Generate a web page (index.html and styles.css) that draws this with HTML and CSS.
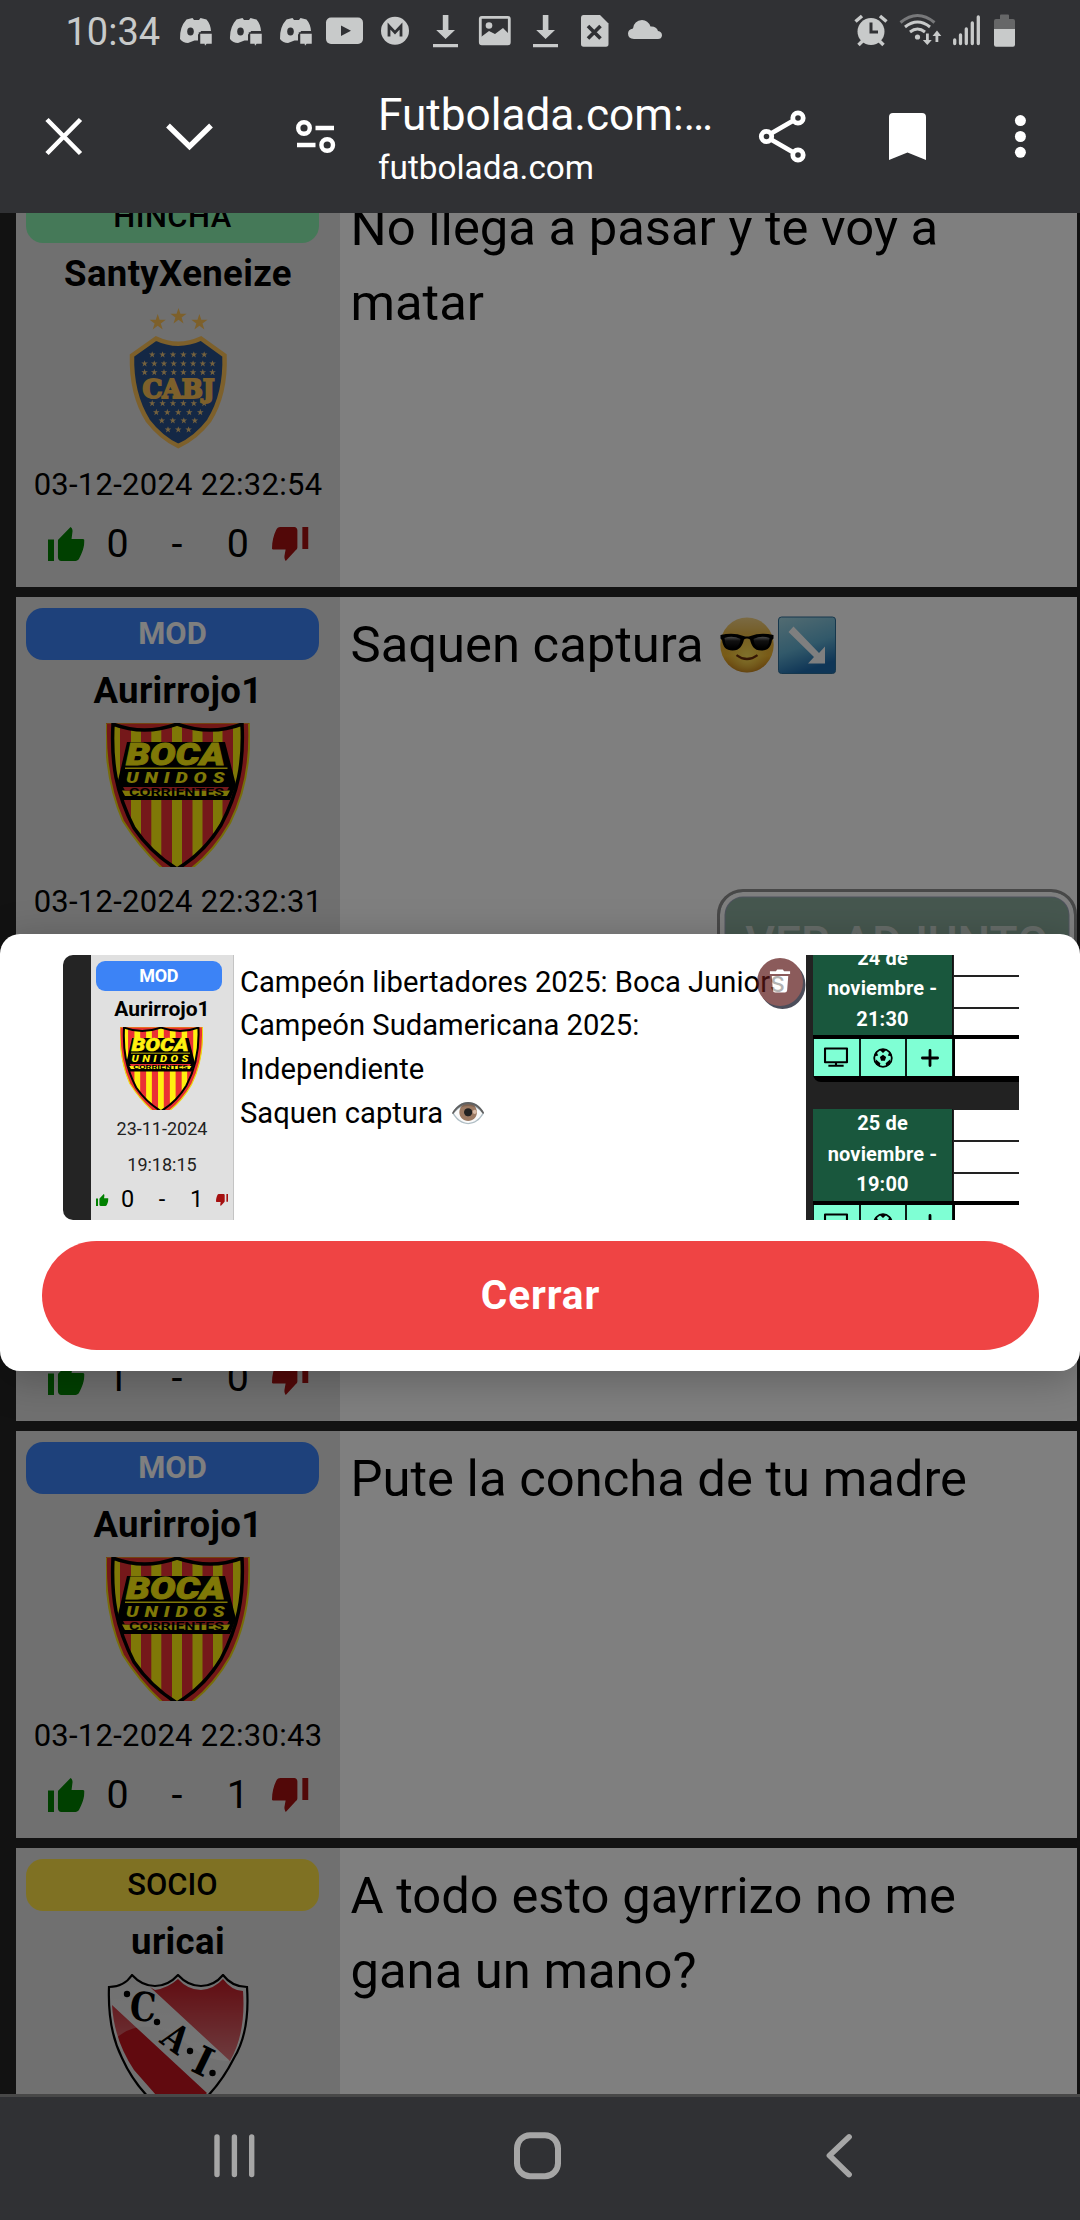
FILE: index.html
```html
<!DOCTYPE html>
<html lang="es">
<head>
<meta charset="utf-8">
<title>Futbolada.com</title>
<link rel="stylesheet" href="styles.css">
</head>
<body>
<svg class="defs" aria-hidden="true">
  <defs>
    <linearGradient id="faceFill" x1="0" y1="0" x2="0" y2="1"><stop offset="0" stop-color="#f6d588"/><stop offset=".3" stop-color="#e9b94a"/><stop offset=".7" stop-color="#f2b62c"/><stop offset="1" stop-color="#b86c10"/></linearGradient>
    <radialGradient id="faceGlow" cx=".5" cy=".7" r=".4"><stop offset="0" stop-color="#ffe258"/><stop offset="1" stop-color="#ffe258" stop-opacity="0"/></radialGradient>
    <linearGradient id="lens" x1="0" y1="0" x2="0" y2="1"><stop offset="0" stop-color="#999"/><stop offset=".35" stop-color="#222"/><stop offset="1" stop-color="#000"/></linearGradient>
    <linearGradient id="arrowFill" x1="0" y1="0" x2=".35" y2="1"><stop offset="0" stop-color="#a6d8e4"/><stop offset=".6" stop-color="#64b2d4"/><stop offset="1" stop-color="#1f6cae"/></linearGradient>
    <linearGradient id="gloss" x1="0" y1="0" x2="0" y2="1"><stop offset="0" stop-color="#fff" stop-opacity="0"/><stop offset="1" stop-color="#fff" stop-opacity=".42"/></linearGradient>
    <clipPath id="unidosClip"><path d="M7 1Q38 13 71 1Q105 13 136 1C138 40 132 70 115 102Q98 130 71 146Q45 130 28 105C10 70 5 40 7 1Z"/></clipPath>
    <clipPath id="caiClip"><path id="caiShape" d="M3 13Q18 13 26 1Q36 12 49 12Q62 12 72 1Q82 12 95 12Q108 12 117 1Q126 13 141 13C143 42 139 66 128 84Q108 124 72 146Q34 124 16 84C5 62 2 40 3 13Z"/></clipPath>
    <symbol id="star" viewBox="-1 -1 2 2"><path d="M0-1 .225-.309H.951L.363.118.588.809 0 .382-.588.809-.363.118-.951-.309H-.225Z"/></symbol>
    <symbol id="up" viewBox="1 1 22 20" preserveAspectRatio="none"><path d="M1 21h3.6V8.400H1V21zM23 8.600c-.2-.4-.7-.6-1.500-.6H15.200l.6-4.600c0-1.100-.5-2-1.200-2.400L8 7.600C7.300 8.200 7 8.500 7 9v10c0 1.100.9 2 2 2h8.500c1 0 1.700-.5 2.200-1.300C21.500 16.500 23 12.500 23 8.600z"/></symbol>
    <symbol id="down" viewBox="1 3 22 20" preserveAspectRatio="none"><path d="M14.500 3H6c-1.200 0-2 .6-2.500 1.700C2 7.500 1 11.500 1 15.600c0 .3.400.6 1.200.6H9.200l-.7 3.800c-.1 1.100.2 2.200.8 3l6.100-6.400c.6-.6.9-1.100.9-1.700V5c0-1.100-.9-2-1.800-2zM19.300 3v13H23V3h-3.700z"/></symbol>
    <symbol id="unidos" viewBox="0 0 144 144">
      <path d="M0 0H143C145 40 138 72 124 100Q108 128 86 145H56Q34 125 17 98C3 66-1 35 0 0Z" fill="#e6302f" stroke="#eedb12" stroke-width="2"/>
      <path d="M0-1H143" stroke="#e6302f" stroke-width="3"/>
      <g clip-path="url(#unidosClip)">
        <path fill="#ea3135" d="M0 0H144V146H0Z"/>
        <path fill="#fff00f" d="M4 0h10v146H4zM25 0h10v146H25zM45.300 0h10v146h-10zM66 0h10v146H66zM86.500 0h10v146h-10zM107 0h9.500v146H107zM127 0h10v146h-10z"/>
        <path d="M21 19H119L130 62 124 77H16L11 62Z"/>
      </g>
      <path d="M7 1Q38 13 71 1Q105 13 136 1C138 40 132 70 115 102Q98 130 71 146Q45 130 28 105C10 70 5 40 7 1Z" fill="none" stroke="#000" stroke-width="3.500"/>
      <path fill="#fff00f" d="M19 44.500H121.500V46H19ZM16 67.500H124L121 73H19Z"/><path fill="#ea3135" d="M17 64H123L121 67.500H19Z"/>
      <text x="20" y="42" textLength="99" lengthAdjust="spacingAndGlyphs" font-size="31" font-weight="900" font-style="italic" fill="#fff00f" stroke="#fff00f" stroke-width=".9">BOCA</text>
      <text transform="translate(20 60) scale(1.350 1)" textLength="73" font-size="14.500" font-weight="900" font-style="italic" fill="#fff00f">UNIDOS</text>
      <text x="23" y="72.500" textLength="95" lengthAdjust="spacingAndGlyphs" font-size="10" font-weight="700">CORRIENTES</text>
    </symbol>
    <symbol id="discord" viewBox="0 0 50 65"><path d="M15.500 19.500l6-1.500 1.500 2h5l1.500-2 6 1.500q4 4.500 4.500 11.500H30l-1 2.500-2 1v6l-3.500 0-6.500 2.500q-5 0-8-4Q8.500 27 15.500 19.500Z"/><ellipse cx="19.500" cy="31.500" rx="3.300" ry="4" fill="#303134"/><path stroke="#303134" stroke-width="1.500" d="M28.500 33H41.500V44.500H36L33.500 47.500 33 44.500H28.500Z"/></symbol>
    <symbol id="download" viewBox="0 0 50 65"><path d="M21.800 15h5.600v15h6.600L24.600 39 15.200 30h6.600zM12 44h25v3.300H12z"/></symbol>
    <symbol id="tv" viewBox="0 0 26 22"><path fill="none" stroke="#000" stroke-width="2.200" stroke-linejoin="round" d="M1.500 1.500h23v14.500h-23zM13 16v3.500M5 19.700h16"/></symbol>
    <symbol id="ball" viewBox="0 0 20 20"><circle cx="10" cy="10" r="8.800" fill="none" stroke="#000" stroke-width="1.800"/><path d="M10 6.800l3.100 2.300-1.200 3.600H8.100L6.900 9.100zM6.200 1.600h7.600L10 4.900zM.8 8.500l2.400-5.300 2 4.400zM19.200 8.500l-2.400-5.300-2 4.400zM3 16.600V11.600l4.400 3.600-.9 3.200zM17 16.600V11.600l-4.400 3.600.9 3.200z"/></symbol>
    <symbol id="plus" viewBox="0 0 18 18"><path fill="none" stroke="#000" stroke-width="2.800" stroke-linecap="round" d="M9 1.400V16.600M1.400 9H16.600"/></symbol>
  </defs>
</svg>

<div class="screen">
  <header class="statusbar">
    <span class="clock">10:34</span>
    <svg class="slot"><use href="#discord"/></svg>
    <svg class="slot"><use href="#discord"/></svg>
    <svg class="slot"><use href="#discord"/></svg>
    <svg class="slot" viewBox="0 0 50 65"><rect x="5" y="17.500" width="37" height="26.500" rx="5"/><path fill="#303134" d="M20 25.500v10.500l10-5.200z"/></svg>
    <svg class="slot" viewBox="0 0 50 65"><circle cx="24" cy="30.800" r="14"/><path fill="none" stroke="#303134" stroke-width="2.800" d="M18 36.500V26l6 6.500 6-6.500V36.500"/></svg>
    <svg class="slot"><use href="#download"/></svg>
    <svg class="slot" viewBox="0 0 50 65"><rect x="9.300" y="17.300" width="29" height="26.500" rx="1.500" fill="none" stroke="#c8caca" stroke-width="2.800"/><circle cx="18" cy="25.500" r="3.300"/><path d="M10 37l8-6 6 3 8-6 6 6v10H10z"/></svg>
    <svg class="slot"><use href="#download"/></svg>
    <svg class="slot" viewBox="0 0 50 65"><path d="M12.500 15H29l8.500 8.500V44q0 2.700-2.500 2.700H12.500Q10 46.700 10 44V18q0-3 2.500-3z"/><path fill="none" stroke="#303134" stroke-width="3.600" d="M17 26l12.500 12.500M29.500 26L17 38.500"/></svg>
    <svg class="slot" viewBox="0 0 50 65"><path d="M13 39q-6-.5-6-5.500 0-4 5-5 1-8 9-8.500 6 0 8.500 6.500 6-.5 7.500 4.500 4 .8 4 4.500-.5 3.500-4 3.500z"/></svg>
    <span class="spacer"></span>
    <svg class="slot" viewBox="846 0 50 65"><circle cx="871" cy="31.500" r="13.500"/><path fill="none" stroke="#c8caca" stroke-width="3.500" d="M855.500 21.500l6.500-5.500M886.500 21.500l-6.500-5.500M858.500 45l5-5M883.500 45l-5-5"/><path fill="none" stroke="#303134" stroke-width="3" d="M871 22.500V32h7"/></svg>
    <svg class="slot" viewBox="896 0 50 65"><g fill="none" stroke="#c8caca" stroke-width="3"><path stroke="#77787a" d="M900.500 22.500q17-14 34 0"/><path d="M905 27q12.500-10 25 0M910 32q7.500-6 15 0"/></g><circle cx="917.500" cy="37" r="2.600"/><path d="M926 33.500h2.800V40h3l-4.500 5-4.500-5h3.200zM935.500 42h2.800v-6h3L937 30.500l-4.500 5.500h3z"/></svg>
    <svg class="slot signal" viewBox="946 0 40 65"><path fill="none" stroke="#c8caca" stroke-width="3.300" stroke-linecap="round" d="M954.700 40v3.500M960.500 35v8.500M966.300 29v14.500M972.300 23v20.500M978.300 17v26.500"/></svg>
    <svg class="slot battery" viewBox="986 0 38 65"><path fill="#666768" d="M1000 18v-2.500q0-1 1-1h7q1 0 1 1V19h4q2 0 2 2v8.500h-21V21q0-2 2-2h4z"/><path d="M994 29h21v15.500q0 2.200-2 2.200h-17q-2 0-2-2.200z"/></svg>
  </header>

  <div class="toolbar">
    <svg class="tool-a" viewBox="0 65 127 148"><path d="M47 119.500l33.500 34M80.500 119.500L47 153.500" stroke-width="4.600"/></svg>
    <svg class="tool-b" viewBox="127 65 125 148"><path d="M168 125.500l21.500 21 21.500-21" stroke-width="5.400"/></svg>
    <svg class="tool-a" viewBox="252 65 127 148"><g stroke-width="4.400"><circle cx="304" cy="128" r="5.800"/><path d="M315.500 128H334M297 145H315.500"/><circle cx="327.200" cy="145" r="5.800"/></g></svg>
    <div class="heading"><div class="title">Futbolada.com:…</div><div class="domain">futbolada.com</div></div>
    <svg class="tool-share" viewBox="716 65 132 148"><g stroke-width="4.800"><circle cx="766.500" cy="136.500" r="5.200"/><circle cx="798" cy="118" r="5.200"/><circle cx="798" cy="155" r="5.200"/><path d="M771 133.500L793.500 120.500M771 139.500L793.500 152.500"/></g></svg>
    <svg class="tool-mark" viewBox="848 65 120 148"><path class="solid" d="M889 117q0-4 4-4h29q4 0 4 4v43l-18.500-7.600L889 160z"/></svg>
    <svg class="tool-more" viewBox="968 65 112 148"><g class="solid"><circle cx="1020.400" cy="120.600" r="5.500"/><circle cx="1020.400" cy="136.500" r="5.500"/><circle cx="1020.400" cy="152.300" r="5.500"/></g></svg>
  </div>

  <main class="page">
    <div class="feed">
      <article class="post">
        <aside class="user">
          <div class="badge hincha">HINCHA</div>
          <div class="name">SantyXeneize</div>
          <svg class="crest" viewBox="0 0 144 144">
            <g fill="#fac056"><use href="#star" x="43.200" y="8" width="17" height="17"/><use href="#star" x="64" y="2" width="17" height="17"/><use href="#star" x="84.900" y="8" width="17" height="17"/></g>
            <path d="M26 49.500L50 32.500Q72 43 95 32.500L118.500 49.500Q120 88 103 115Q90 132 72.300 140Q55 132 42 115Q25 88 26 49.500Z" fill="#28508a" stroke="#fac056" stroke-width="4.500"/>
            <g class="rows" fill="#e8c27c"></g>
            <text x="36.500" y="92" textLength="72" lengthAdjust="spacingAndGlyphs" class="cabj">CABJ</text>
          </svg>
          <div class="date">03-12-2024 22:32:54</div>
          <div class="votes"><svg class="like"><use href="#up"/></svg><span>0</span><span>-</span><span>0</span><svg class="dislike"><use href="#down"/></svg></div>
        </aside>
        <p class="message">No llega a pasar y te voy a<br>matar</p>
      </article>

      <article class="post">
        <aside class="user">
          <div class="badge mod">MOD</div>
          <div class="name">Aurirrojo1</div>
          <svg class="crest"><use href="#unidos"/></svg>
          <div class="date">03-12-2024 22:32:31</div>
        </aside>
        <div class="message">Saquen captura <svg class="emoji" viewBox="716.500 615 60 60"><ellipse cx="746.500" cy="645" rx="26.700" ry="27.500" fill="url(#faceFill)"/><ellipse cx="746.500" cy="645" rx="26.700" ry="27.500" fill="url(#faceGlow)"/><path d="M736 655q10.500 8 21 0" fill="none" stroke="#6b2d08" stroke-width="2.200"/><path d="M720 635q13-3 23 1 3.500 1 7 0 10-4 23-1v3.500l-1.500 1.500c-1 7-4 10.500-10.500 10.500-8 0-10-5-11.500-11-2-1.500-4-1.500-6 0-1.500 6-4 11-11.500 11-6.500 0-9.500-3.500-10.500-10.500L720 638.500z"/><path fill="url(#lens)" d="M724 638q8-3 16 1-1 9.500-8.500 9.500-7 0-7.500-10.500zM753 639q8-4 16-1-.5 10.500-7.500 10.500-7.500 0-8.500-9.500z"/></svg><svg class="emoji" viewBox="776 615 60 60"><rect x="777.500" y="617" width="57" height="56.500" rx="3" fill="url(#arrowFill)" stroke="#2d6e99"/><path fill="#fff" d="M787.500 632l5-5.500 25.500 26.500 6-6.500V663.500H807l6-6.500z"/></svg>
          <button class="attach">VER ADJUNTO</button>
        </div>
      </article>

      <article class="post">
        <aside class="user bottom">
          <div class="votes"><svg class="like"><use href="#up"/></svg><span>1</span><span>-</span><span>0</span><svg class="dislike"><use href="#down"/></svg></div>
        </aside>
        <p class="message"></p>
      </article>

      <article class="post">
        <aside class="user">
          <div class="badge mod">MOD</div>
          <div class="name">Aurirrojo1</div>
          <svg class="crest"><use href="#unidos"/></svg>
          <div class="date">03-12-2024 22:30:43</div>
          <div class="votes"><svg class="like"><use href="#up"/></svg><span>0</span><span>-</span><span>1</span><svg class="dislike"><use href="#down"/></svg></div>
        </aside>
        <p class="message">Pute la concha de tu madre</p>
      </article>

      <article class="post">
        <aside class="user">
          <div class="badge socio">SOCIO</div>
          <div class="name">uricai</div>
          <svg class="crest" viewBox="0 0 144 144">
            <g clip-path="url(#caiClip)">
              <path fill="#e2e2e2" d="M0 0H144V146H0Z"/>
              <path fill="#c2151f" d="M44 13L49 16Q62 14 72 5Q82 16 95 16Q108 15 117 5Q126 17 137 17C139 44 135 68 124 87ZM6 31L101 119 72 146 28 96Q8 66 6 31Z"/>
              <path fill="url(#gloss)" d="M0 0H144V78Q128 92 104 84Q92 78 78 68Q38 38 8 66L0 70Z"/>
            </g>
            <use href="#caiShape" fill="none" stroke="#000" stroke-width="2.200"/>
            <g class="cai"><circle cx="21" cy="20" r="3.200"/><circle cx="51" cy="48" r="3.200"/><circle cx="84" cy="77" r="3.200"/><circle cx="106.500" cy="99" r="3.200"/>
            <text transform="translate(36 47) rotate(4) scale(.820 1)" font-size="40">C</text><text transform="translate(62 75) rotate(36) scale(.800 1)" font-size="38">A</text><text transform="translate(91 100) rotate(26) scale(.900 1)" font-size="40">I</text></g>
          </svg>
        </aside>
        <p class="message">A todo esto gayrrizo no me<br>gana un mano?</p>
      </article>
    </div>

    <div class="backdrop"></div>

    <section class="modal">
      <div class="gallery">
        <div class="shot">
          <div class="shot-side"></div>
          <div class="shot-user">
            <div class="shot-badge">MOD</div>
            <div class="shot-name">Aurirrojo1</div>
            <svg class="shot-crest"><use href="#unidos"/></svg>
            <div class="shot-date">23-11-2024</div>
            <div class="shot-date">19:18:15</div>
            <div class="shot-votes"><svg class="like"><use href="#up"/></svg><span>0</span><span>-</span><span>1</span><svg class="dislike"><use href="#down"/></svg></div>
          </div>
          <div class="shot-text">Campeón libertadores 2025: Boca Juniors<br>Campeón Sudamericana 2025:<br>Independiente<br>Saquen captura <span class="eye">👁️</span></div>
          <div class="trash"><svg viewBox="0 0 24 26"><path d="M1 2.500h6.500L9 .5h6l1.500 2H23v3H1zM3 7.500h18l-1.200 15.500q-.3 2.500-2.500 2.500H6.700q-2.200 0-2.500-2.500z"/></svg></div>
        </div>
        <div class="shot fixtures">
          <div class="match first">
            <div class="when">24 de<br>noviembre -<br>21:30</div><div class="lines"><i></i><i></i><i></i></div>
            <div class="actions"><span><svg class="tv"><use href="#tv"/></svg></span><span><svg class="ball"><use href="#ball"/></svg></span><span><svg class="plus"><use href="#plus"/></svg></span></div><div class="blank"></div>
          </div>
          <div class="match">
            <div class="when">25 de<br>noviembre -<br>19:00</div><div class="lines"><i></i><i></i><i></i></div>
            <div class="actions"><span><svg class="tv"><use href="#tv"/></svg></span><span><svg class="ball"><use href="#ball"/></svg></span><span><svg class="plus"><use href="#plus"/></svg></span></div><div class="blank"></div>
          </div>
        </div>
      </div>
      <button class="close">Cerrar</button>
    </section>
  </main>

  <nav class="navbar">
    <svg viewBox="174 2097 120 123"><path stroke-width="5.400" stroke-linecap="round" d="M217 2137V2174.500M234.400 2137V2174.500M251.700 2137V2174.500"/></svg>
    <svg viewBox="476 2097 120 123"><rect x="516" y="2135.200" width="41" height="41" rx="13" stroke-width="6"/></svg>
    <svg viewBox="779 2097 120 123"><path stroke-width="5.800" stroke-linecap="round" stroke-linejoin="round" d="M849 2137L829.500 2155.500 849 2174.500"/></svg>
  </nav>
</div>
<script src="stars.js"></script>
</body>
</html>
```
FILE: stars.js
```js
// Rows of small stars on the shield: [y, first x, step, count]
const rows = [
  [48.7, 46.2, 10.4, 6], [57.7, 38.6, 9.7, 8], [66.3, 38.6, 9.7, 8],
  [97.3, 46.2, 10.4, 6], [106.3, 50.3, 11, 5], [114.7, 55.8, 11, 4], [123.7, 62, 10.3, 3]
];
const group = document.querySelector('.rows');
for (const [y, x0, step, count] of rows) {
  for (let i = 0; i < count; i++) {
    const star = document.createElementNS('http://www.w3.org/2000/svg', 'use');
    star.setAttribute('href', '#star');
    star.setAttribute('x', x0 + i * step - 3.5);
    star.setAttribute('y', y - 3.5);
    star.setAttribute('width', 7);
    star.setAttribute('height', 7);
    group.appendChild(star);
  }
}
```
FILE: styles.css
```css
* { box-sizing: border-box; }
body { margin: 0; font-family: Roboto, "Liberation Sans", sans-serif; color: #000; background: #303134; }
svg { display: block; flex: none; }
button { font: inherit; }
.defs { width: 0; height: 0; position: absolute; }
.screen { width: 1080px; height: 2220px; display: flex; flex-direction: column; overflow: hidden; }

.statusbar { height: 65px; display: flex; padding-right: 56px; flex: none; }
.clock { width: 171px; padding-left: 65.500px; font-size: 38px; line-height: 65px; color: #c8caca; }
.slot { width: 50px; height: 65px; fill: #c8caca; }
.signal { width: 40px; }
.battery { width: 38px; }
.spacer { flex: 1; }

.toolbar { height: 148px; display: flex; flex: none; }
.toolbar svg { height: 148px; fill: none; stroke: #fff; }
.toolbar .solid { fill: #fff; stroke: none; }
.tool-a { width: 127px; }
.tool-b { width: 125px; }
.tool-share { width: 132px; }
.tool-mark { width: 120px; }
.tool-more { width: 112px; }
.heading { width: 337px; padding-top: 24px; padding-left: 0; color: #fff; white-space: nowrap; }
.title { margin-left: -1px; font-size: 44.150px; line-height: 52px; }
.domain { margin-top: 7px; margin-left: -1px; font-size: 33.300px; line-height: 40px; }

.page { height: 1884px; position: relative; overflow: hidden; background: #242424; flex: none; border-bottom: 3px solid #484848; }
.feed { margin-top: -33px; padding: 0 3px 0 16px; display: flex; flex-direction: column; gap: 10px; }
.post { height: 407px; display: flex; flex: none; }
.user { width: 324px; padding-top: 11px; background: #e0e0e0; flex: none; }
.user.bottom { padding-top: 338px; }
.badge { width: 293px; height: 52px; margin-left: 10px; border-radius: 17px; font-size: 30.940px; line-height: 51px; text-align: center; }
.hincha { background: #8af2b0; font-weight: 500; letter-spacing: .5px; }
.mod { background: #3c83f6; color: #fff; font-weight: 700; }
.socio { background: #fee347; font-weight: 500; }
.name { height: 63px; font-size: 36.560px; font-weight: 700; line-height: 61px; text-align: center; letter-spacing: .34px; }
.crest { width: 144px; height: 144px; margin-left: 90px; }
.crest text, .shot-crest text { font-family: Roboto, sans-serif; }
.crest .cabj { font-family: "DejaVu Serif", serif; font-weight: 700; font-size: 26.500px; fill: #fac056; stroke: #fac056; stroke-width: 2px; }
.cai text { font-family: "DejaVu Serif", serif; font-weight: 700; text-anchor: middle; }
.date { height: 68px; font-size: 30.940px; line-height: 70px; text-align: center; letter-spacing: .29px; }
.votes { height: 53px; padding-left: 32px; display: flex; font-size: 39.400px; line-height: 51px; }
.votes span { width: 59.500px; text-align: center; }
.votes .like, .votes .dislike { width: 36.500px; height: 34px; margin-top: 9px; }
.votes span:nth-child(2) { width: 66px; }
.votes span:nth-child(3) { width: 53px; }
.votes span:nth-child(4) { width: 68.500px; }
.like { fill: #008000; }
.dislike { fill: #a51010; }
.message { flex: 1; margin: 0; padding: 9.500px 60px 0 10.500px; background: #fff; font-size: 50.750px; line-height: 75.940px; position: relative; }
.emoji { display: inline-block; width: 60px; height: 60px; margin-left: .5px; vertical-align: -13.500px; }
.emoji + .emoji { margin-left: 0; }
.attach { position: absolute; right: 0; top: 292px; width: 360px; height: 108px; padding: 0; border: 3.500px solid #909090; border-radius: 26px; background: #8cae9e; box-shadow: inset 0 0 0 4.500px #fff, inset 0 0 0 5.500px #9ea6bc; color: #ccd8d2; font-size: 46px; font-weight: 500; line-height: 96px; }

.backdrop { position: absolute; inset: 0; background: rgba(0, 0, 0, .5); }

.modal { position: absolute; left: 0; top: 721px; width: 1080px; height: 437px; padding: 21px 42px; border-radius: 20px; background: #fff; box-shadow: 0 8px 40px rgba(0, 0, 0, .25); }
.gallery { display: flex; height: 265px; margin: 0 19px 0 21px; }
.shot { width: 743px; height: 265px; display: flex; position: relative; border-radius: 10px; overflow: hidden; flex: none; }
.shot-side { width: 28px; background: #242424; }
.shot-user { width: 143px; background: #e0e0e0; border-right: 1px solid #c4c4c4; padding-top: 5.500px; text-align: center; }
.shot-badge { width: 125.500px; height: 30.500px; margin-left: 5px; border-radius: 9px; background: #3c83f6; color: #fff; font-size: 18px; font-weight: 700; line-height: 29px; letter-spacing: -.3px; }
.shot-name { height: 35.500px; font-size: 21px; font-weight: 700; line-height: 36.500px; }
.shot-crest { width: 83px; height: 83px; margin-left: 29px; }
.shot-date { height: 36px; font-size: 18px; line-height: 37px; color: #222; }
.shot-votes { height: 33px; display: flex; padding-left: 5px; font-size: 23.500px; line-height: 35px; }
.shot-votes svg { width: 12.500px; height: 12px; margin-top: 12px; }
.shot-votes span:nth-child(2) { width: 38px; }
.shot-votes span:nth-child(3) { width: 31px; }
.shot-votes span:nth-child(4) { width: 38px; }
.shot-text { padding: 5.500px 0 0 6px; font-size: 29.200px; line-height: 43.850px; white-space: nowrap; }
.eye { margin-left: 0; font-size: 29px; line-height: 0; }
.trash { position: absolute; left: 694px; top: 3px; width: 46px; height: 48px; border-radius: 50%; background: #5b1616; box-shadow: 2.500px 3px 0 #000214; opacity: .7; }
.trash svg { width: 22px; height: 26px; margin: 10px 0 0 12px; fill: #fff; }

.fixtures { width: 213px; flex-direction: column; border-radius: 0; background: #222; padding-left: 7px; }
.match { width: 206px; display: grid; grid-template-columns: 140px 66px; grid-template-rows: 92px 37px; row-gap: 4px; background: #000; flex: none; margin-bottom: 26.500px; padding-bottom: 6px; border-bottom-left-radius: 8px; }
.match.first { grid-template-rows: 80px 37px; }
.when { display: flex; align-items: flex-end; justify-content: center; background: #19573d; color: #fff; font-size: 20px; font-weight: 700; line-height: 30.500px; text-align: center; border-right: 1.500px solid #111; padding-bottom: 1px; letter-spacing: .15px; overflow: hidden; }
.lines { display: flex; flex-direction: column; justify-content: flex-end; gap: 2px; background: #222; }
.lines i { height: 30px; background: #fff; flex: none; margin-left: 1px; }
.lines i:last-child { height: 26.500px; }
.first .lines { overflow: hidden; }
.actions { display: grid; grid-template-columns: 44.500px 44.500px 44.500px; column-gap: 2.200px; padding-left: 1px; background: #0c1d18; }
.actions span { display: flex; align-items: center; justify-content: center; background: #7fffd4; }
.tv { width: 26px; height: 21px; }
.ball { width: 20px; height: 20px; }
.plus { width: 18px; height: 18px; }
.blank { background: #fff; margin-left: 2px; }
.close { display: block; width: 997px; height: 109px; margin-top: 21px; padding: 0; border: 0; border-radius: 55px; background: #ef4444; color: #fff; font-size: 40.500px; font-weight: 700; letter-spacing: .9px; line-height: 107px; }

.navbar { height: 123px; display: flex; gap: 182.500px; padding-left: 174px; }
.navbar svg { width: 120px; height: 123px; fill: none; stroke: #a6a6a6; }
```
